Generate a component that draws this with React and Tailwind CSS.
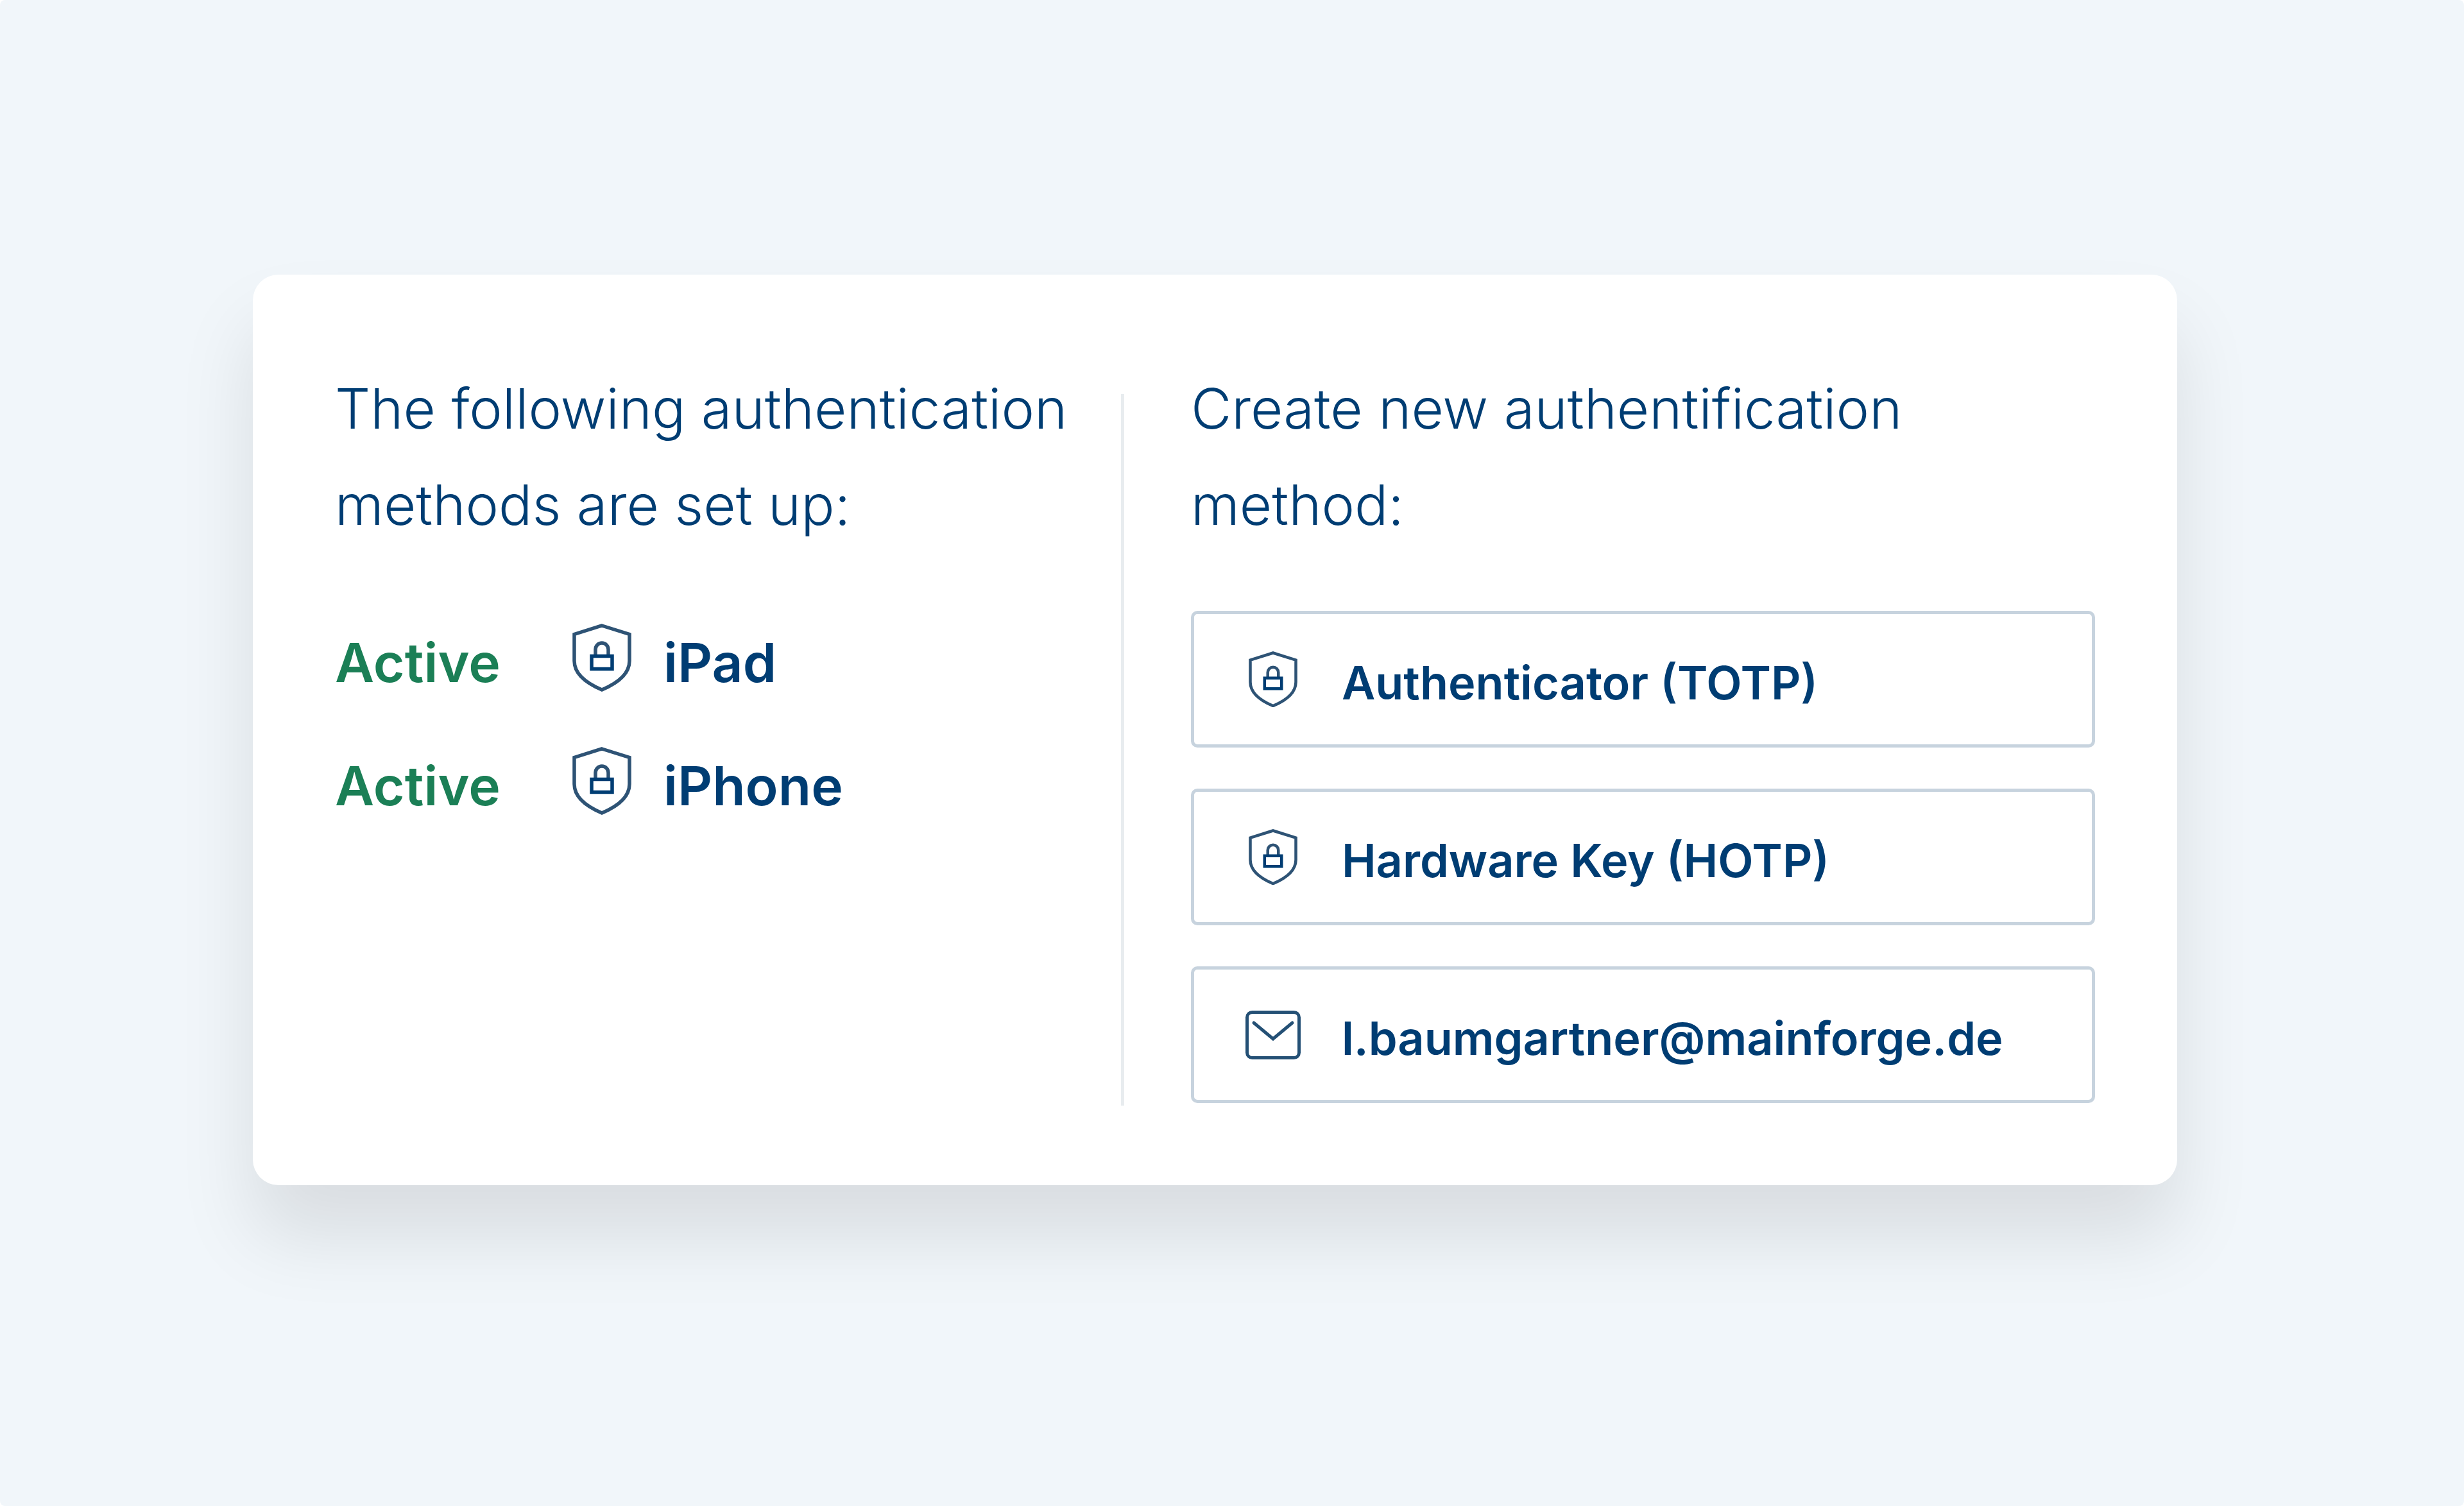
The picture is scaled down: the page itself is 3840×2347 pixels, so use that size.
const activeMethods = [
  { id: 1, name: "iPad", status: "Active" },
  { id: 2, name: "iPhone", status: "Active" },
];

const newMethods = [
  { id: "totp", label: "Authenticator (TOTP)", icon: ShieldIcon },
  { id: "hotp", label: "Hardware Key (HOTP)", icon: ShieldIcon },
  { id: "email", label: "l.baumgartner@mainforge.de", icon: MailIcon },
];

function ShieldIcon({ className }) {
  return (
    <svg className={className} viewBox="0 0 92 106" fill="none" stroke="#2e5375" strokeWidth="5.5" aria-hidden="true">
      <path d="M46 3 L89 16.5 V58 C89 78 72 92 46 103 C20 92 3 78 3 58 V16.5 Z" />
      <path d="M36 50 V40 A10 10 0 0 1 56 40 V50" />
      <rect x="30" y="50.5" width="32" height="20" stroke="#003d73" />
    </svg>
  );
}

function MailIcon({ className }) {
  return (
    <svg className={className} viewBox="0 0 86 76" fill="none" stroke="#245075" strokeWidth="5" aria-hidden="true">
      <rect x="2.5" y="2.5" width="81" height="71" rx="8" />
      <path d="M13 19 L43 44 L73 19" strokeLinecap="round" />
    </svg>
  );
}

export default function App() {
  return (
    <div className="bg-white">
      <main className="min-h-screen rounded-lg bg-[#f1f6fa] pt-[428px] pr-[447px] pb-32 pl-[394px] font-['Inter',sans-serif] text-[#003d73]">
        <div className="grid grid-cols-[1224fr_5px_1512fr] rounded-[40px] bg-white p-32 shadow-[0_80px_120px_rgba(0,0,0,0.1)]">
          {/* Existing methods */}
          <section className="pt-1.5">
            <h2 className="text-[87px] leading-[150px] font-light">
              The following authentication methods are set up:
            </h2>
            <ul className="mt-[110px] flex flex-col gap-[86px]">
              {activeMethods.map((method) => (
                <li key={method.id} className="flex h-[106px] items-center text-[84px] leading-[106px] font-semibold">
                  <span className="w-[370px] pt-4 text-[#1b7f56]">{method.status}</span>
                  <ShieldIcon className="w-[92px] shrink-0" />
                  <span className="pt-4 pl-[50px]">{method.name}</span>
                </li>
              ))}
            </ul>
          </section>

          <div className="mt-[58px] -mb-1 bg-[#e8ecef]" />

          {/* Add another one */}
          <section className="pt-1.5 pl-26">
            <h2 className="text-[87px] leading-[150px] font-light">
              Create new authentification method:
            </h2>
            <div className="mt-[90px] flex flex-col gap-16">
              {newMethods.map(({ id, label, icon: Icon }) => (
                <button
                  key={id}
                  type="button"
                  className="flex h-[213px] w-full cursor-pointer items-center gap-16 rounded-[10px] border-5 border-[#c7d3de] px-20 text-left text-[72px] font-semibold hover:bg-[#f1f6fa]"
                >
                  <span className="flex w-[86px] shrink-0 justify-center">
                    <Icon className={id === "email" ? "w-[86px]" : "w-[76px]"} />
                  </span>
                  <span className="pt-[10px]">{label}</span>
                </button>
              ))}
            </div>
          </section>
        </div>
      </main>
    </div>
  );
}
